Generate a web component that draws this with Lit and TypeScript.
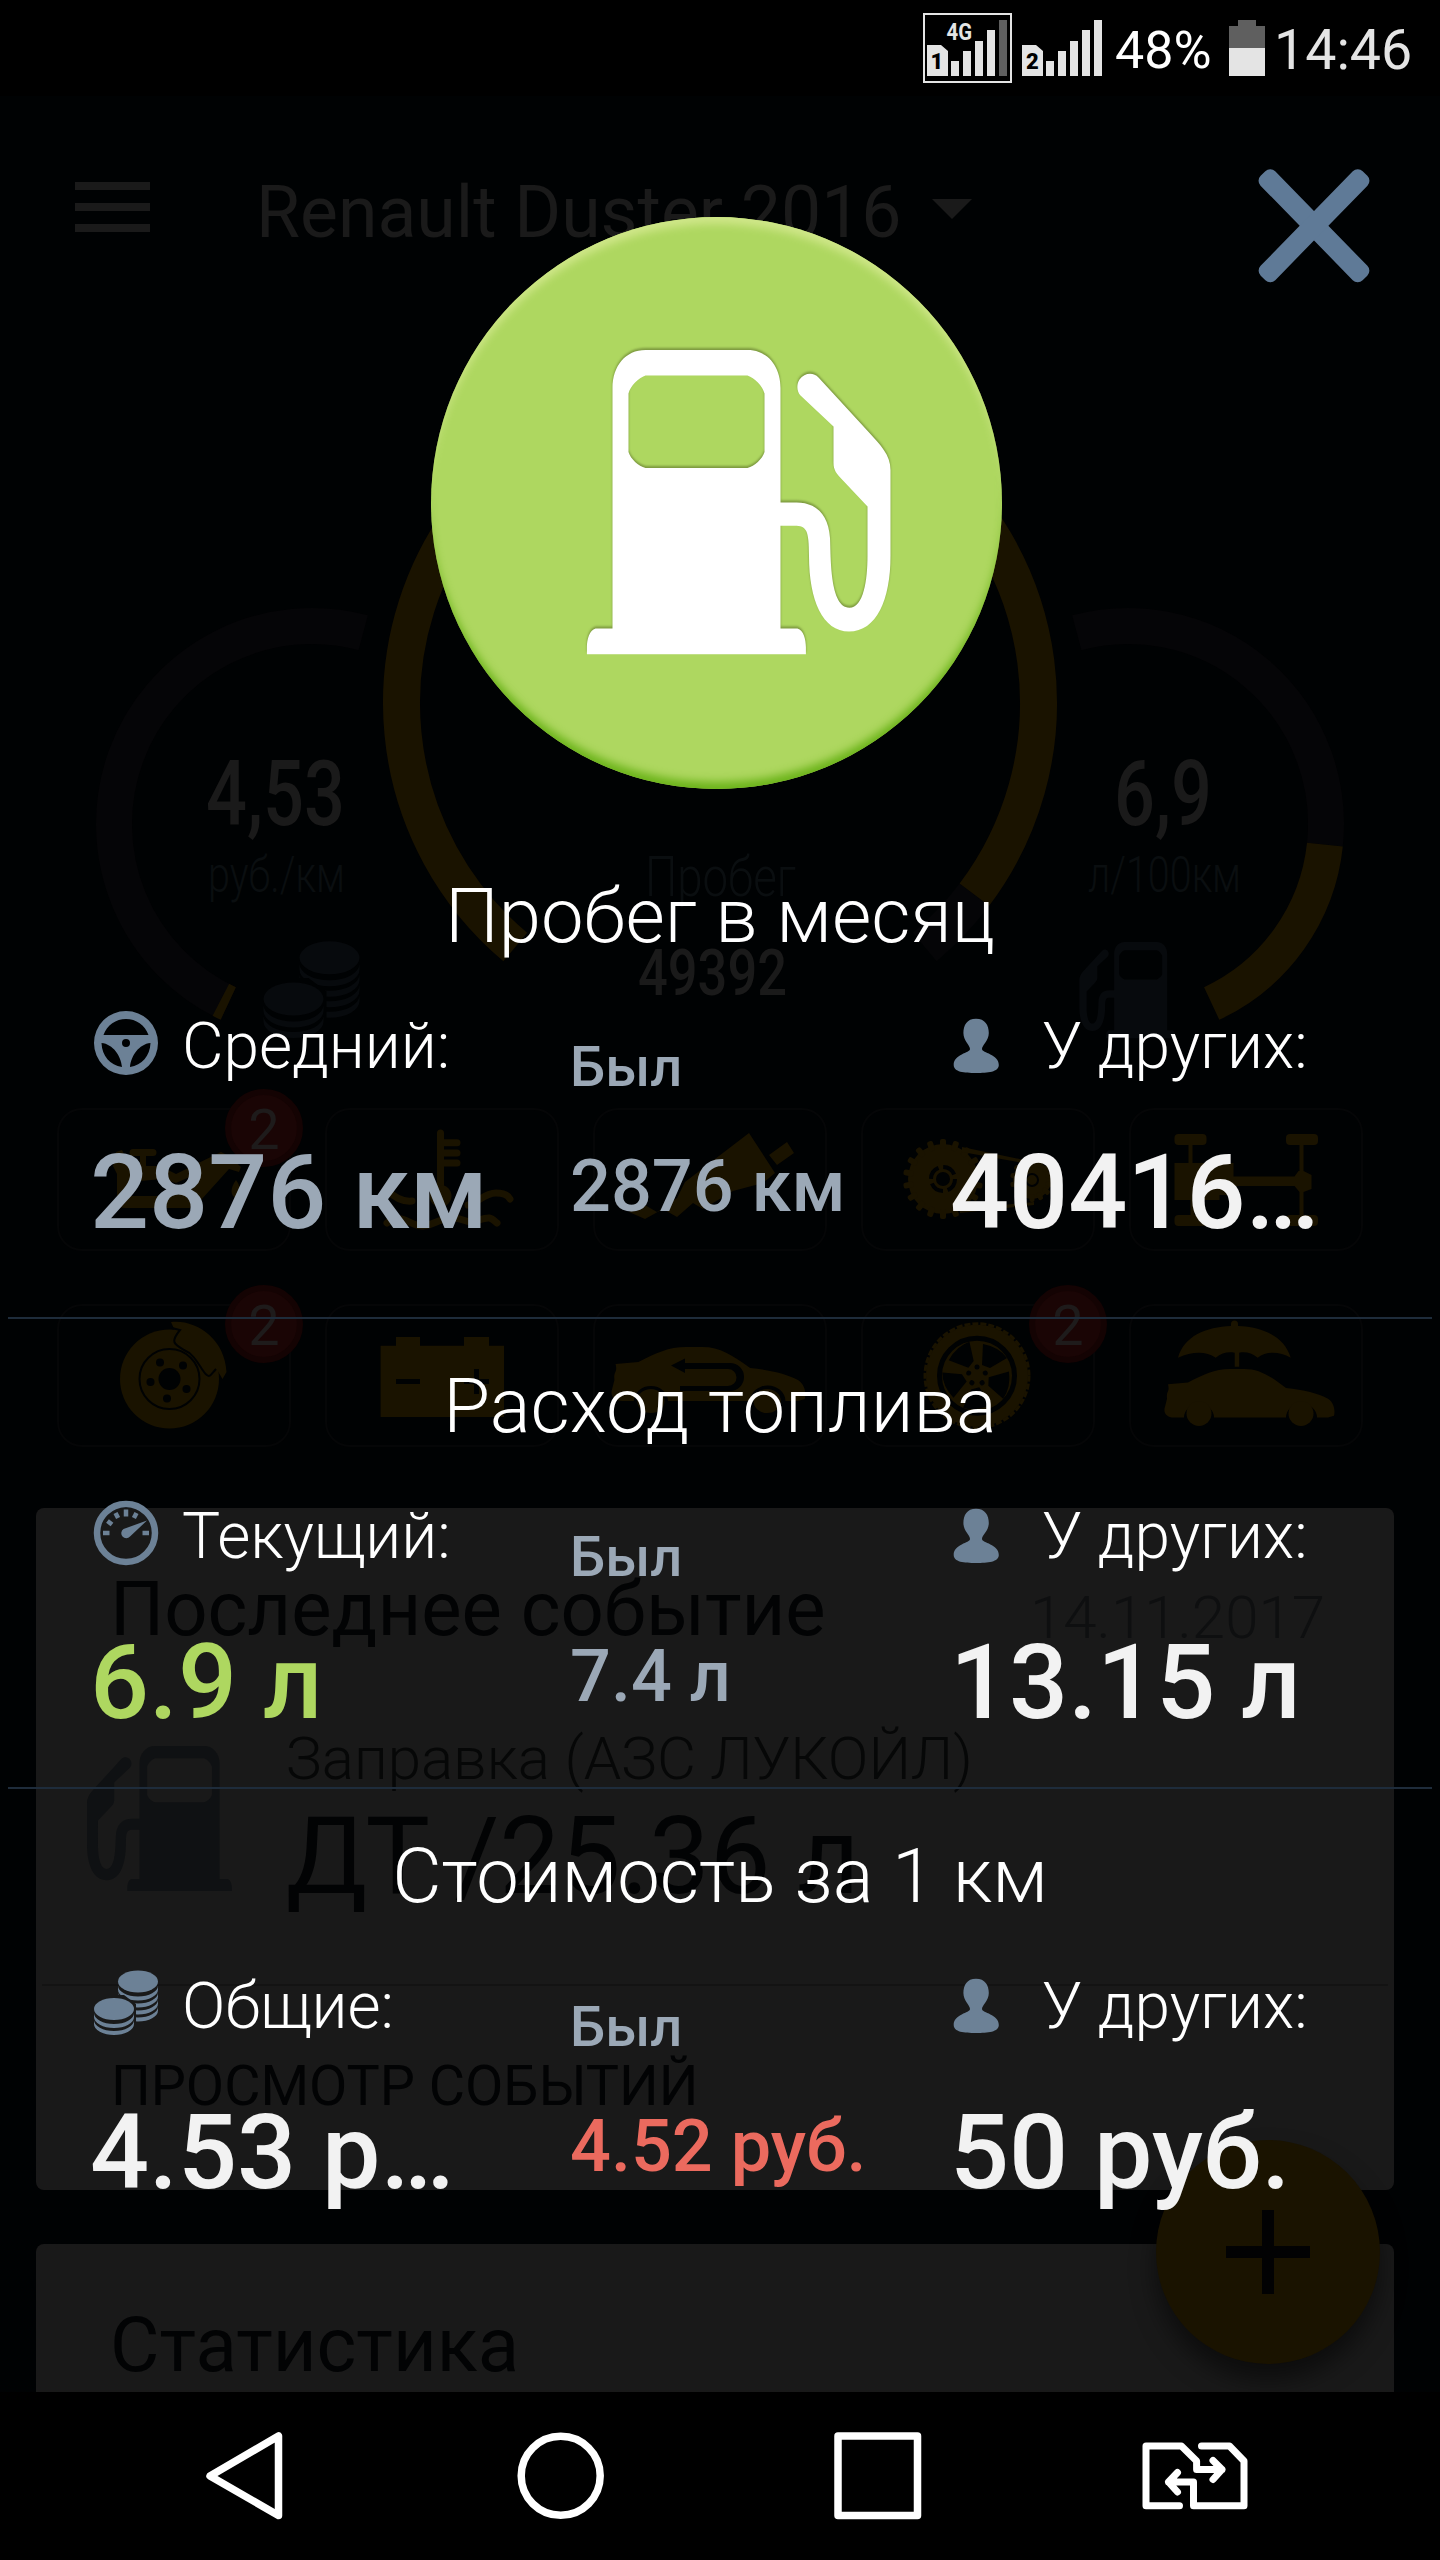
import { LitElement, html, css, svg } from "lit";
import { customElement, property } from "lit/decorators.js";

const PUMP =
  "M645 350H747C767 350 780 366 780 388V502.500H796C815 502.500 828 514 829.500 538C830.500 556 829 607.700 849 607.700C863 607.700 867 580 867 556V506.400L842 480C836 474 833 470 833 463V426.600L800 395.500C796 391 796 384 799 379.500C804 372.500 813 372 818 377.500L869 433C880 445 890 455 890 470V556C890 600 876 631.500 848.500 631.500C822 631.500 808.500 600 808.500 556C808.500 530 806 525.800 794 525.800H780V628.600H797C803 630 805.400 640 805.400 647V654.300H586.400V647C586.400 640 589 630 595 628.600H612V388C612 366 625 350 645 350ZM645 375.600C638 378 630 386 628 393.500V452C630 459 638 466 645 468H747C754 466 762 459 764 452V393.500C762 386 754 378 747 375.600Z";

const coinStack = (x: number, y: number, n: number) => {
  const bands = [];
  for (let i = 0; i < n; i++) {
    bands.push(svg`<path d="M${x - 20} ${y + 4 + i * 7}a20 11 0 0 0 40 0v4a20 11 0 0 1 -40 0z"/>`);
  }
  return svg`<ellipse cx=${x} cy=${y} rx="20" ry="11"/>${bands}`;
};

const coins = svg`
  <clipPath id="behind"><path d="M0 -2H66V66H42V33L30 24H0Z"/></clipPath>
  <g clip-path="url(#behind)">${coinStack(44, 10.5, 4)}</g>
  ${coinStack(20, 38, 2)}`;

const wheel = svg`<path fill-rule="evenodd" d="M32 0A32 32 0 0 1 32 64A32 32 0 0 1 32 0ZM9.500 24H54.500C51 14 42 8 32 8S13 14 9.500 24ZM7.500 32C8 45 16 54 28 56C27 45 19 33 7.500 32ZM56.500 32C56 45 48 54 36 56C37 45 45 33 56.500 32ZM32 28A4 4 0 0 0 32 36A4 4 0 0 0 32 28Z"/>`;

const dial = svg`
  <circle cx="32" cy="32" r="29" fill="none" stroke="#6c8196" stroke-width="6.500"/>
  <path d="M53 19.500L36 35.500A5 5 0 1 1 29.500 28Z"/>
  <path d="M32 8.500v7M21.500 12l2.600 5M42.500 12l-2.600 5M13.500 20l4.500 3.500M9 32h6.500M48.500 32h6.500" stroke="#6c8196" stroke-width="4.500"/>`;

const LEAD_ICONS: Record<string, unknown> = { wheel, dial, coins };

interface Metric {
  title: string;
  icon: string;
  label: string;
  value: string;
  tone: string;
  previous: string;
  previousTone: string;
  others: string;
}

const METRICS: Metric[] = [
  { title: "Пробег в месяц", icon: "wheel", label: "Средний:", value: "2876 км", tone: "steel", previous: "2876 км", previousTone: "steel", others: "40416…" },
  { title: "Расход топлива", icon: "dial", label: "Текущий:", value: "6.9 л", tone: "lime", previous: "7.4 л", previousTone: "steel", others: "13.15 л" },
  { title: "Стоимость за 1 км", icon: "coins", label: "Общие:", value: "4.53 р…", tone: "pale", previous: "4.52 руб.", previousTone: "coral", others: "50 руб." },
];

@customElement("metric-section")
export class MetricSection extends LitElement {
  @property({ attribute: false }) metric!: Metric;

  static styles = css`
    :host { display: block; padding-top: 42px; }
    .title { margin: 0; font-weight: 300; font-size: 76px; line-height: 90px; text-align: center; white-space: nowrap; color: #fff; }
    .cols { display: grid; grid-template-columns: 480px 380px 1fr; padding: 47px 0 0 90px; height: 246px; }
    .col { display: flex; flex-direction: column; gap: 46px; white-space: nowrap; }
    .mid { padding-top: 26px; gap: 43px; }
    .label { display: flex; height: 76px; font-weight: 300; font-size: 64px; line-height: 78px; color: #fff; }
    .lead { width: 64px; height: 64px; margin: 3px 24px 0 4px; fill: #6c8196; overflow: visible; }
    .person { width: 46px; height: 64px; margin: 3px 43px 0 3px; fill: #6c8196; }
    .value { font-weight: 500; font-size: 104px; line-height: 126px; }
    .was { font-weight: 500; font-size: 56px; line-height: 66px; color: #9ba8b6; }
    .previous { font-weight: 500; font-size: 72px; line-height: 87px; }
    .steel { color: #9ba8b6; }
    .lime { color: #aed760; }
    .pale { color: #f2f2f2; }
    .coral { color: #eb6a5e; }
  `;

  render() {
    const m = this.metric;
    return html`
      <h2 class="title">${m.title}</h2>
      <div class="cols">
        <div class="col">
          <div class="label"><svg class="lead" viewBox="0 0 64 64">${LEAD_ICONS[m.icon]}</svg><span>${m.label}</span></div>
          <div class="value ${m.tone}">${m.value}</div>
        </div>
        <div class="col mid">
          <div class="was">Был</div>
          <div class="previous ${m.previousTone}">${m.previous}</div>
        </div>
        <div class="col">
          <div class="label">
            <svg class="person" viewBox="953 1011 46 64"><path d="M976 1018.700C985 1018.700 988.800 1025 988.800 1033C988.800 1041 982 1045 982 1049C982 1053 998.800 1054 998.800 1065C998.800 1072 988 1073 976 1073S953.700 1072 953.700 1065C953.700 1054 970 1053 970 1049C970 1045 963.400 1041 963.400 1033C963.400 1025 967 1018.700 976 1018.700Z"/></svg>
            <span>У других:</span>
          </div>
          <div class="value pale">${m.others}</div>
        </div>
      </div>`;
  }
}

const gearTeeth = (cx: number, cy: number, r: number, n: number, w: number, len: number) =>
  Array.from({ length: n }, (_, i) => svg`<rect x=${cx - w / 2} y=${cy - r - len} width=${w} height=${len + 3} rx="2" transform="rotate(${(360 / n) * i} ${cx} ${cy})"/>`);

const CAR = "M3 33C2 24 6 26 4 17L24 15C40 6 50 0 66 0H80C96 0 106 8 122 21C140 23 154 27 164 33C171 38 171 48 170 52L164 54H153A15 15 0 0 0 122 54H50A15 15 0 0 0 20 54H10C2 54 -1 48 1 42Z";

const TILES: { badge?: string; art: unknown }[] = [
  {
    badge: "2",
    art: svg`<path d="M133 1149h20a3 3 0 0 1 0 7h-7v10h14l16 8 45-22 8 4 12 11-2 5-10-3-28 31c-4 6-8 8-14 8h-62c-6 0-8-3-8-8v-26l-4-8 3-14 6-2 8 16h10v-10h-7a3 3 0 0 1 0-7zM130 1182v14h42l20-20-16 7-14-4zM236 1180c6 8 6 16 0 18-6-2-6-10 0-18z" fill-rule="evenodd"/>`,
  },
  {
    art: svg`<g fill="none" stroke="#1a1300" stroke-width="7" stroke-linecap="round"><path d="M440.500 1133V1195M441 1142.700h16M441 1153h16M441 1163h16M387 1190c8 8 16 12 25 11M468 1205c10-2 16-12 28-12 7 0 12 2 14 6M387 1223c14-12 24 4 36 3s20-10 32-8 12 6 24 2 12-2 18 3"/></g><circle cx="440.500" cy="1196" r="11"/>`,
  },
  { art: svg`<path d="M629 1212l14-8 14 8 20-14 8-16 64-49 26 40-12 10-30 8-30 18-10-6-16 14-14-8-18 10zM769 1155l18-13 7 11-17 12z"/>` },
  {
    art: svg`<circle cx="943" cy="1179" r="35"/>${gearTeeth(943, 1179, 33, 18, 6, 7)}<circle cx="1032" cy="1180" r="19"/>${gearTeeth(1032, 1180, 17, 14, 5, 5)}<path d="M962 1147l72 15v3l-72-13zM960 1209l74-7v3l-74 8z"/><circle cx="943" cy="1179" r="12" fill="none" stroke="#000203" stroke-width="4" stroke-dasharray="14 4.800"/><circle cx="943" cy="1179" r="7" fill="#000203"/><circle cx="1032" cy="1180" r="6" fill="none" stroke="#000203" stroke-width="2"/>`,
  },
  {
    art: svg`<rect x="1174.500" y="1134" width="32" height="11" rx="4"/><rect x="1286" y="1134" width="32" height="11" rx="4"/><rect x="1174.500" y="1215" width="32" height="11" rx="4"/><rect x="1286" y="1215" width="32" height="11" rx="4"/><path d="M1174.500 1163h14v-20h4v20h41v13.500h61l4-5.500h1v-28h4v28l8 4v14l-8 3v24h-4v-24l-5-6h-61v9h-14v5h-25v18h-4v-18h-16z"/>`,
  },
  {
    badge: "2",
    art: svg`<circle cx="169.500" cy="1379" r="49.500"/><path d="M171 1322c24-3 54 16 55.500 50l-4 7-6-10c-2 9-6 12-10 6-9-14-12-20-24-26-14-6-12-10-7-17z"/><path d="M172 1328l8 2c-10 12-6 14 4 20 10 4 14 14 20 22s7 2 12-3" fill="none" stroke="#000203" stroke-width="2"/><circle cx="169.500" cy="1379" r="30" fill="none" stroke="#000203" stroke-width="2"/><circle cx="169.500" cy="1379" r="11" fill="#000203"/><g fill="#000203"><circle cx="160" cy="1362.500" r="4"/><circle cx="183" cy="1365.500" r="4"/><circle cx="186.500" cy="1389" r="4"/><circle cx="167" cy="1398.500" r="4"/><circle cx="150.500" cy="1382" r="4"/></g>`,
  },
  {
    art: svg`<path fill-rule="evenodd" d="M380.600 1345.700H396V1337h24v8.700h44V1337h25v8.700h15V1417H380.600ZM396 1379v5h24v-5ZM464 1379v5h10v10h5v-10h10v-5h-10v-10h-5v10Z"/>`,
  },
  {
    art: svg`<g transform="translate(611 1347) scale(1.140 1)"><path d=${CAR}/><circle cx="35" cy="54" r="12"/><circle cx="137" cy="54" r="12"/></g><path d="M671 1365.500l14-7v4.500h45a9 9 0 0 1 0 28h-50v-5h48a5 5 0 0 0 0-17h-43v4z" fill="#000203"/>`,
  },
  {
    badge: "2",
    art: svg`<circle cx="977" cy="1375.700" r="51"/><circle cx="977" cy="1375.700" r="52" fill="none" stroke="#1a1300" stroke-width="3" stroke-dasharray="6 2"/><circle cx="977" cy="1375.700" r="37.500" fill="none" stroke="#000203" stroke-width="5"/>${[0, 72, 144, 216, 288].map((a) => svg`<path d="M983 1344q16 3 24 14l-17 10-8-3z" fill="#000203" transform="rotate(${a} 977 1375.700)"/><circle cx="977" cy="1367" r="2.500" fill="#000203" transform="rotate(${a} 977 1375.700)"/>`)}`,
  },
  {
    art: svg`<path d="M1178 1357.700C1184 1336 1206 1327 1231 1326v-2a3.500 3.500 0 1 1 7 0v2c27 1 47 12 52.700 31.700-11-6-24-7-33 0-6-5-12-6-18.500-5v14h-4.500v-14c-7-1-13 0-19 5-10-7-24-6-37.700 0z"/><g transform="translate(1164 1369)"><path d=${CAR} transform="scale(1 .9)"/><circle cx="35" cy="44.500" r="12.500"/><circle cx="137" cy="44.500" r="12.500"/></g>`,
  },
];

const arc = (cx: number, cy: number, r: number, from: number, to: number) => {
  const p = (a: number) => `${(cx + r * Math.sin((a * Math.PI) / 180)).toFixed(2)} ${(cy - r * Math.cos((a * Math.PI) / 180)).toFixed(2)}`;
  return `M${p(from)}A${r} ${r} 0 ${to - from > 180 ? 1 : 0} 1 ${p(to)}`;
};

@customElement("app-root")
export class AppRoot extends LitElement {
  static styles = css`
    :host { display: block; font-family: Roboto, "Liberation Sans", sans-serif; }
    .screen { width: 1440px; height: 2560px; background: #000; display: flex; flex-direction: column; overflow: hidden; }
    .status { height: 96px; flex: none; display: flex; justify-content: flex-end; padding-right: 29px; color: #e4e4e4; }
    .sims { width: 182px; height: 96px; }
    .pct { width: 98px; margin-left: 11px; font-size: 52px; line-height: 101px; color: #fff; }
    .battery { width: 36px; height: 96px; margin-left: 16px; }
    .time { width: 137px; margin-left: 9px; font-size: 55.500px; line-height: 102px; white-space: nowrap; }
    .body { flex: 1; min-height: 0; display: grid; background: #000203; overflow: hidden; }
    .layer { grid-area: 1 / 1; min-width: 0; position: relative; height: 2296px; overflow: hidden; }

    .appbar { display: flex; align-items: flex-start; height: 264px; padding: 73px 0 0 75px; box-sizing: border-box; color: #1a1a1a; }
    .burger { width: 76px; height: 50px; margin-top: 13px; fill: #1a1a1a; }
    .car { font-size: 71.500px; line-height: 87px; margin-left: 105px; width: 646px; white-space: nowrap; }
    .caret { width: 40px; height: 20px; margin: 30px 0 0 30px; fill: #1a1a1a; }
    .gauges { display: block; width: 1440px; height: 748px; }
    .strong { fill: #1a1a1a; font-weight: 500; }
    .faint { fill: #0a0e10; font-weight: 300; }
    .tiles { display: grid; grid-template-columns: repeat(5, 234px); grid-auto-rows: 143px; gap: 53px 34px; padding: 0 0 61px 57px; }
    .tile { position: relative; box-sizing: border-box; border: 2px solid #050607; border-radius: 25px; }
    .art { display: block; width: 234px; height: 143px; margin: -2px; fill: #1a1300; overflow: visible; }
    .badge { position: absolute; left: 166px; top: -21px; width: 66px; height: 66px; border: 6px solid #140303; border-radius: 50%; background: #1a0505; color: #1e1b1b; font-size: 56px; line-height: 71px; text-align: center; }

    .card { margin: 0 46px 54px 36px; background: #191919; border-radius: 8px; color: #020304; white-space: nowrap; }
    .event { height: 682px; display: flex; flex-direction: column; }
    .head { display: flex; justify-content: space-between; padding: 56px 69px 0 74px; height: 165px; }
    .h { font-size: 76px; line-height: 90px; }
    .date { font-weight: 300; font-size: 60px; line-height: 72px; margin-top: 18px; color: #0e0f10; }
    .entry { display: flex; gap: 54px; padding: 0 0 0 51px; height: 255px; }
    .pump { width: 145px; height: 145px; margin-top: 17px; fill: #0f1113; }
    .station { font-weight: 300; font-size: 60px; line-height: 72px; color: #060707; margin-top: -6px; }
    .fuel { font-size: 108px; line-height: 126px; margin-top: -2px; }
    .action { border-top: 2px solid #131313; margin: 0 6px; padding: 67px 70px 0 69px; font-size: 55.700px; line-height: 66px; }
    .stats { padding: 56px 74px; height: 200px; }
    .fab { position: absolute; left: 1156px; top: 2044px; width: 224px; height: 224px; border-radius: 50%; background: #1a1300; box-shadow: 0 16px 24px rgba(0, 0, 0, .5); display: flex; align-items: center; justify-content: center; }
    .plus { width: 84px; height: 84px; fill: #020203; }

    .close { position: absolute; left: 1258px; top: 71px; width: 112px; height: 116px; }
    .hero { display: flex; justify-content: center; padding: 121px 8px 40px 0; }
    .disc { width: 571px; height: 572px; border-radius: 50%; background: #aed760; box-shadow: inset 0 10px 9px -3px #d0e78a, inset 0 -10px 9px -3px #6cb41b; }
    .disc-art { display: block; width: 571px; height: 572px; }
    .glyph { filter: drop-shadow(0 -2px 1px rgba(90, 110, 40, .6)); }
    .rule { height: 2px; margin: 63px 8px 0; background: #1e2c3b; }
    .tight { margin-top: 43px; }

    .nav { height: 168px; flex: none; display: block; width: 1440px; fill: none; stroke: #fff; stroke-width: 7.500; stroke-linecap: round; stroke-linejoin: round; }
  `;

  private tile(t: { badge?: string; art: unknown }, i: number) {
    const x = 57 + (i % 5) * 268;
    const y = 1108 + Math.floor(i / 5) * 196;
    return html`<div class="tile"><svg class="art" viewBox="${x} ${y} 234 143">${t.art}</svg>${t.badge ? html`<span class="badge">${t.badge}</span>` : ""}</div>`;
  }

  private text(cls: string, x: number, y: number, size: number, width: number, label: string) {
    return svg`<text class=${cls} x=${x} y=${y} font-size=${size} textLength=${width} lengthAdjust="spacingAndGlyphs">${label}</text>`;
  }

  render() {
    return html`
      <main class="screen">
        <header class="status">
          <svg class="sims" viewBox="922 0 182 96" fill="#e4e4e4">
            <rect x="924" y="14" width="87" height="68" fill="none" stroke="#e4e4e4" stroke-width="2"/>
            <path d="M927 45h14l7 6v25h-21zM1022 45h14l7 6v25h-21z"/>
            <path d="M951 61h8v15h-8zM963 51h8v25h-8zM975 41h8v35h-8zM987 30h8v46h-8zM1046 61h8v15h-8zM1058 51h8v25h-8zM1070 41h8v35h-8zM1082 30h8v46h-8zM1094 20h8v56h-8z"/>
            <path d="M999 20h8v56h-8z" fill="#5f5f5f"/>
            <text x="946.500" y="40" font-size="24" font-weight="700" textLength="25.500" lengthAdjust="spacingAndGlyphs">4G</text>
            <text x="930.500" y="69" font-size="22" font-weight="900" fill="#000">1</text>
            <text x="1026" y="69" font-size="22" font-weight="900" fill="#000">2</text>
          </svg>
          <span class="pct">48%</span>
          <svg class="battery" viewBox="1229 0 36 96"><path d="M1238 20h18v6h9v22h-36V26h9z" fill="#5f5f5f"/><path d="M1229 48h36v28h-36z" fill="#e4e4e4"/></svg>
          <span class="time">14:46</span>
        </header>

        <div class="body">
          <section class="layer">
            <div class="appbar">
              <svg class="burger" viewBox="0 0 76 50"><path d="M0 0h75v8H0zM0 21h75v8H0zM0 42h75v8H0z"/></svg>
              <span class="car">Renault Duster 2016</span>
              <svg class="caret" viewBox="0 0 40 20"><path d="M0 0h40L20 20z"/></svg>
            </div>
            <svg class="gauges" viewBox="0 360 1440 748">
              <g fill="none" stroke="#050507" stroke-width="36">
                <path d=${arc(312, 824, 198, 205, 375)}/>
                <path d=${arc(312, 824, 198, 205, 207.4)} stroke="#1a1300"/>
                <path d=${arc(1128, 824, 198, -15, 96)}/>
                <path d=${arc(1128, 824, 198, 96, 155)} stroke="#1a1300"/>
                <path d=${arc(720, 703, 318.5, 127, 140)} stroke-width="37"/>
                <path d=${arc(720, 703, 318.5, -140, 127)} stroke="#1a1300" stroke-width="37"/>
              </g>
              ${this.text("strong", 206, 824.5, 90, 139, "4,53")}
              ${this.text("faint", 208, 892, 50, 137, "руб./км")}
              ${this.text("faint", 645, 896, 55, 151, "Пробег")}
              ${this.text("strong", 638, 994.5, 64, 149, "49392")}
              ${this.text("strong", 1114, 824.5, 90, 98, "6,9")}
              ${this.text("faint", 1088, 892, 50, 153, "л/100км")}
              <g fill="#070a0d" transform="translate(263.500 942) scale(1.500)">${coins}</g>
              <path d=${PUMP} fill="#070a0d" fill-rule="evenodd" transform="translate(1360.600 831.500) scale(-.316 .316)"/>
            </svg>
            <div class="tiles">${TILES.map((t, i) => this.tile(t, i))}</div>
            <article class="card event">
              <div class="head"><span class="h">Последнее событие</span><span class="date">14.11.2017</span></div>
              <div class="entry">
                <svg class="pump" viewBox="586 350 304 304"><path d=${PUMP} fill-rule="evenodd" transform="matrix(-1 0 0 1 1476 0)"/></svg>
                <div>
                  <div class="station">Заправка (АЗС ЛУКОЙЛ)</div>
                  <div class="fuel">ДТ /25.36 л</div>
                </div>
              </div>
              <div class="action">ПРОСМОТР СОБЫТИЙ</div>
            </article>
            <article class="card stats"><span class="h">Статистика</span></article>
            <div class="fab"><svg class="plus" viewBox="0 0 84 84"><path d="M36 0h12v36h36v12H48v36H36V48H0V36h36z"/></svg></div>
          </section>

          <section class="layer">
            <svg class="close" viewBox="1258 167 112 116"><g fill="#5f7a97"><rect x="1241" y="215.500" width="146" height="20.500" rx="7" transform="rotate(45.700 1314 225.700)"/><rect x="1241" y="215.500" width="146" height="20.500" rx="7" transform="rotate(-45.700 1314 225.700)"/></g></svg>
            <div class="hero">
              <div class="disc"><svg class="disc-art" viewBox="430.500 217 571 572"><path class="glyph" d=${PUMP} fill="#fff" fill-rule="evenodd"/></svg></div>
            </div>
            <metric-section .metric=${METRICS[0]}></metric-section>
            <div class="rule"></div>
            <metric-section .metric=${METRICS[1]}></metric-section>
            <div class="rule tight"></div>
            <metric-section .metric=${METRICS[2]}></metric-section>
          </section>
        </div>

        <svg class="nav" viewBox="0 2392 1440 168">
          <path d="M278.500 2436v79.500L210 2476z"/>
          <circle cx="560.700" cy="2475.800" r="39.500"/>
          <rect x="838" y="2436" width="79.500" height="79.500"/>
          <g stroke-width="7"><path d="M1179.500 2505.800H1146V2446H1181.400L1196.600 2461V2469.500H1222M1213 2460.500L1222 2469.500L1213 2479.500M1201.500 2446H1229.500L1244 2461V2505.800H1193.500V2482H1168.500M1177.500 2472.500L1168.500 2482L1177.500 2492"/></g>
        </svg>
      </main>`;
  }
}
